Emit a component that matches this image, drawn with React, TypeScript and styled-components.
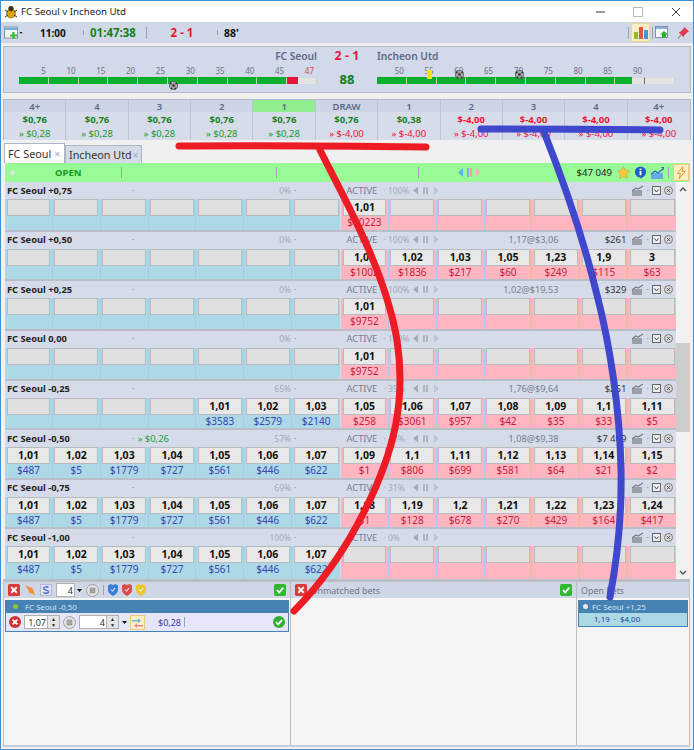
import React from 'react';
import styled, { createGlobalStyle } from 'styled-components';

const GlobalStyle = createGlobalStyle`
  html, body { margin: 0; padding: 0; background: #f0f0f0; }
  body { font-family: "Noto Sans", "Open Sans", sans-serif; }
  * { box-sizing: border-box; }
`;

const Window = styled.div`
  position: relative;
  width: 694px;
  height: 750px;
  border: 1px solid #3f8fd2;
  background: #f0f0f0;
  overflow: hidden;
  display: flex;
  flex-direction: column;
`;

const TitleBar = styled.div`
  height: 21px;
  background: #fff;
  display: flex;
  align-items: center;
  padding-left: 3px;
  font-size: 9.7px;
  color: #222;
  gap: 3px;
  flex: none;
`;

const WindowButtons = styled.div`
  margin-left: auto;
  display: flex;
  align-items: center;
  gap: 28px;
  padding-right: 12px;
`;

const Toolbar = styled.div`
  height: 21px;
  background: #d0d8e8;
  display: flex;
  align-items: center;
  padding-left: 3px;
  flex: none;
`;

const ToolbarText = styled.span<{ $color?: string; $width: number; $center?: boolean; $ml?: number; $size?: number }>`
  width: ${p => p.$width}px;
  margin-left: ${p => p.$ml || 0}px;
  font-size: ${p => p.$size || 11.5}px;
  font-weight: 700;
  color: ${p => p.$color || '#111'};
  text-align: ${p => (p.$center ? 'center' : 'left')};
  flex: none;
`;

const ToolSep = styled.span<{ $h?: number; $ml?: number }>`
  width: 1px;
  height: ${p => p.$h || 12}px;
  background: #9aa2b4;
  margin-left: ${p => p.$ml || 0}px;
  flex: none;
`;

const ToolRight = styled.div`
  margin-left: auto;
  display: flex;
  align-items: center;
  gap: 2px;
  padding-right: 4px;
`;

const ActiveTool = styled.span`
  width: 19px;
  height: 19px;
  background: #fbeec4;
  border: 1px solid #ecd68e;
  display: flex;
  align-items: center;
  justify-content: center;
`;

const PinSlot = styled.span`
  display: flex;
  margin-left: 5px;
`;

const ScorePanel = styled.div`
  margin: 3px 2px 0;
  height: 47px;
  background: #d2d9e9;
  border: 1px solid #b3b9c6;
  display: grid;
  grid-template-columns: 298px 60px 298px;
  grid-template-rows: 18px 1fr;
  padding: 0 15px;
  flex: none;
`;

const TeamName = styled.div<{ $right?: boolean }>`
  font-size: 10.2px;
  font-weight: 600;
  color: #5d6886;
  text-align: ${p => (p.$right ? 'right' : 'left')};
  padding-top: 2px;
`;

const ScoreText = styled.div`
  font-size: 12.5px;
  font-weight: 700;
  color: #e8163c;
  text-align: center;
`;

const Minute = styled.div`
  font-size: 13px;
  font-weight: 700;
  color: #0f7f1c;
  text-align: center;
  padding-top: 5px;
`;

const Timeline = styled.div`
  position: relative;
`;

const TickRow = styled.div`
  display: grid;
  grid-template-columns: repeat(10, 1fr);
  height: 12px;
`;

const Tick = styled.span<{ $red?: boolean }>`
  font-size: 8px;
  line-height: 12px;
  color: ${p => (p.$red ? '#d64058' : '#6d7488')};
  text-align: right;
  padding-right: 3px;
`;

const Track = styled.div`
  display: grid;
  grid-template-columns: repeat(10, 1fr);
  height: 7px;
`;

const Seg = styled.div<{ $stops: string; $line?: string }>`
  background: ${p => p.$stops};
  border-right: 1px solid ${p => p.$line || '#c8d8c8'};
  border-top: 1px solid rgba(0, 0, 0, 0.05);
`;

const Marker = styled.span<{ $x: number; $y: number }>`
  position: absolute;
  left: ${p => p.$x}px;
  top: ${p => p.$y}px;
  display: flex;
`;

const OddsStrip = styled.div`
  margin: 6px 2px 0;
  height: 41px;
  display: grid;
  grid-template-columns: repeat(11, 1fr);
  border: 1px solid #b3b9c6;
  flex: none;
`;

const OddsCell = styled.div`
  background: #d6dcea;
  border-right: 1px solid #bcc3d2;
  display: flex;
  flex-direction: column;
  text-align: center;
  &:last-child { border-right: 0; }
`;

const OddsHead = styled.div<{ $on?: boolean }>`
  height: 12px;
  line-height: 13px;
  font-size: 9.5px;
  font-weight: 600;
  color: #5d6886;
  background: ${p => (p.$on ? '#90ee90' : '#ccd4e6')};
`;

const OddsValue = styled.div<{ $red?: boolean }>`
  font-size: 9.5px;
  font-weight: 700;
  line-height: 16px;
  color: ${p => (p.$red ? '#f01030' : '#167f1e')};
`;

const OddsSub = styled.div<{ $red?: boolean }>`
  font-size: 9.5px;
  line-height: 12px;
  color: ${p => (p.$red ? '#f01030' : '#1a9a2a')};
`;

const Tabs = styled.div`
  margin: 3px 0 0 3px;
  height: 20px;
  display: flex;
  align-items: flex-end;
  flex: none;
`;

const Tab = styled.div<{ $on?: boolean }>`
  height: ${p => (p.$on ? 20 : 18)}px;
  width: ${p => (p.$on ? 61 : 77)}px;
  background: ${p => (p.$on ? '#fff' : '#d4dbe9')};
  border: 1px solid #aeb5c4;
  border-bottom: 0;
  font-size: 10.8px;
  color: #333;
  white-space: nowrap;
  display: flex;
  align-items: center;
  justify-content: space-between;
  padding: 0 3px;
`;

const TabClose = styled.span`
  font-size: 8px;
  color: #a8adb8;
`;

const OpenBar = styled.div`
  margin-left: 4px;
  margin-right: 3px;
  height: 19px;
  background: #98fb98;
  display: flex;
  align-items: center;
  flex: none;
`;

const OpenDot = styled.span`
  width: 5px;
  height: 5px;
  border-radius: 50%;
  background: #d8e8d8;
  margin-left: 5px;
  flex: none;
`;

const OpenLabel = styled.span`
  font-size: 9.5px;
  font-weight: 700;
  color: #129a1a;
  margin-left: 40px;
  width: 66px;
  flex: none;
`;

const TransportSlot = styled.span`
  display: flex;
  margin-left: 39px;
`;

const OpenSum = styled.span`
  font-size: 9.6px;
  color: #222;
  margin-left: auto;
  white-space: nowrap;
`;

const OpenIcons = styled.span`
  display: flex;
  align-items: center;
  gap: 4px;
  margin-left: 5px;
  padding-right: 1px;
`;

const Board = styled.div`
  margin-left: 4px;
  margin-right: 3px;
  height: 397px;
  display: grid;
  grid-template-columns: 1fr 14px;
  flex: none;
`;

const Rows = styled.div`
  display: grid;
  grid-template-rows: repeat(8, 1fr);
  min-height: 0;
`;

const Row = styled.div`
  background: #d6dbea;
  border-bottom: 2px solid #b9bec9;
  display: flex;
  flex-direction: column;
  min-height: 0;
  &:last-child { border-bottom: 0; }
`;

const RowHead = styled.div`
  height: 16px;
  margin-bottom: 1px;
  display: grid;
  grid-template-columns: 1fr 1fr;
  flex: none;
`;

const HeadSide = styled.div<{ $back?: boolean }>`
  display: flex;
  align-items: center;
  padding-left: 2px;
  padding-right: ${p => (p.$back ? 44 : 0)}px;
  min-width: 0;
`;

const RowTitle = styled.span`
  width: 125px;
  font-size: 9.3px;
  font-weight: 700;
  color: #222;
  white-space: nowrap;
  flex: none;
`;

const Dot = styled.span`
  color: #8c92a0;
  font-size: 9px;
  line-height: 1;
  flex: none;
`;

const Matched = styled.span`
  font-size: 9.5px;
  color: #22a040;
  margin-left: 3px;
  white-space: nowrap;
  flex: none;
`;

const Pct = styled.span`
  margin-left: auto;
  font-size: 8.5px;
  color: #a5aab6;
  padding-right: 3px;
`;

const Active = styled.span`
  font-size: 9.3px;
  color: #777e8e;
  margin-left: 4px;
  width: 37px;
  flex: none;
`;

const RowPct = styled.span`
  font-size: 8.5px;
  color: #a5aab6;
  width: 29px;
  flex: none;
`;

const Avg = styled.span`
  font-size: 9.2px;
  color: #777e8e;
  margin-left: auto;
  white-space: nowrap;
`;

const Exposure = styled.span`
  width: 68px;
  font-size: 9.6px;
  color: #333;
  text-align: right;
  white-space: nowrap;
  flex: none;
`;

const AvgGap = styled.span`
  margin-left: auto;
`;

const RowIcons = styled.span`
  display: flex;
  align-items: center;
  gap: 3px;
  margin-left: 5px;
  padding-right: 3px;
  flex: none;
`;

const Ladders = styled.div`
  flex: 1;
  display: grid;
  grid-template-columns: 1fr 1fr;
  gap: 1px;
  min-height: 0;
`;

const Ladder = styled.div<{ $lay?: boolean }>`
  display: grid;
  grid-template-columns: repeat(7, 1fr);
  background: ${p => (p.$lay ? '#ffb6c1' : '#add8e6')};
`;

const Slot = styled.div`
  display: flex;
  flex-direction: column;
  align-items: stretch;
  padding: 0 1.5px;
  border-right: 1px solid #a9c9e6;
  &:last-child { border-right: 0; }
`;

const PriceButton = styled.div<{ $empty: boolean }>`
  height: 17px;
  background: ${p => (p.$empty ? '#e0e0e0' : '#e8e8e8')};
  border: 1px solid #b7babe;
  font-size: 10.5px;
  font-weight: 700;
  line-height: 15px;
  text-align: center;
  color: #111;
  flex: none;
`;

const Amount = styled.div<{ $lay?: boolean }>`
  font-size: 10px;
  line-height: 13px;
  text-align: center;
  color: ${p => (p.$lay ? '#c8203c' : '#3a44b0')};
`;

const Scrollbar = styled.div`
  background: #f2f2f2;
  display: flex;
  flex-direction: column;
  align-items: center;
  justify-content: space-between;
  position: relative;
  padding: 5px 0 4px;
`;

const Thumb = styled.div`
  position: absolute;
  top: 161px;
  left: 0;
  right: 0;
  height: 89px;
  background: #cdcdcd;
`;

const Bottom = styled.div`
  margin: 0 3px 2px 2px;
  flex: 1;
  display: grid;
  grid-template-columns: 287px 286px 1fr;
  border: 1px solid #c2c2c2;
  border-top: 3px solid #b9bec9;
  border-bottom: 2px solid #c8ced8;
  background: #f5f5f5;
  min-height: 0;
`;

const Pane = styled.div`
  border-right: 1px solid #bdbdbd;
  display: flex;
  flex-direction: column;
  &:last-child { border-right: 0; }
`;

const PaneBar = styled.div`
  height: 16px;
  background: #cfd6e6;
  display: flex;
  align-items: center;
  padding: 0 4px;
  gap: 4px;
  flex: none;
  font-size: 8.9px;
  color: #717786;
`;

const SpinGroup = styled.span`
  display: flex;
  align-items: center;
  gap: 2px;
  flex: none;
`;

const BetHead = styled.div<{ $pad: number; $gap: number }>`
  margin: 2px 1px 0 1px;
  height: 13px;
  background: #4682b4;
  display: flex;
  align-items: center;
  padding-left: ${p => p.$pad}px;
  gap: ${p => p.$gap}px;
  font-size: 7.9px;
  color: #d6e4f2;
  white-space: nowrap;
`;

const BetDot = styled.span<{ $color: string }>`
  width: 5px;
  height: 5px;
  border-radius: 50%;
  background: ${p => p.$color};
  flex: none;
`;

const BetRow = styled.div`
  margin: 0 1px;
  height: 19px;
  background: #e6e6fa;
  border: 1px solid #4682b4;
  border-top: 0;
  display: flex;
  align-items: center;
  padding: 0 3px;
  gap: 3px;
  font-size: 9px;
`;

const SpinBox = styled.span<{ $w: number }>`
  width: ${p => p.$w}px;
  height: 14px;
  background: #fff;
  border: 1px solid #b0b0b0;
  display: flex;
  align-items: center;
  justify-content: flex-end;
  font-size: 9px;
  color: #333;
  padding-right: 1px;
  flex: none;
`;

const Spinner = styled.span`
  width: 12px;
  height: 14px;
  background: #e4e4e4;
  border: 1px solid #b0b0b0;
  border-left: 0;
  font-size: 5px;
  line-height: 6px;
  color: #222;
  text-align: center;
  margin-left: -3px;
  flex: none;
`;

const Stake = styled.span`
  color: #3a3aa8;
  margin-left: 10px;
`;

const PushRight = styled.span`
  margin-left: auto;
  display: flex;
`;

const OpenBetRow = styled.div`
  margin: 0 1px;
  height: 14px;
  background: #add8e6;
  border: 1px solid #4682b4;
  border-top: 0;
  font-size: 7.9px;
  line-height: 12px;
  color: #26409a;
  padding-left: 15px;
  white-space: nowrap;
`;

const Sketch = styled.svg`
  position: absolute;
  left: -1px;
  top: -1px;
  pointer-events: none;
`;

/* icons */
const Bug = () => (
  <svg width="14" height="14" viewBox="0 0 14 14">
    <ellipse cx="7" cy="8.500" rx="4.500" ry="4.500" fill="#d8a418" stroke="#6b5410" strokeWidth=".6" />
    <circle cx="7" cy="3.600" r="2.600" fill="#3a3214" />
    <path d="M1 5l3 2M13 5l-3 2M1 12l3-2M13 12l-3-2" stroke="#3a3214" strokeWidth="1" />
  </svg>
);

const NewWindow = () => (
  <svg width="19" height="14" viewBox="0 0 19 14">
    <rect x=".5" y="1" width="13" height="11" fill="#f4f6fa" stroke="#8392a8" />
    <rect x="1" y="1.500" width="12" height="2.500" fill="#78b0e0" />
    <path d="M9.500 6v7M6 9.500h7" stroke="#38b82c" strokeWidth="2.200" />
    <path d="M15.500 6h3l-1.500 2z" fill="#222" />
  </svg>
);

const BarsIcon = () => (
  <svg width="14" height="13" viewBox="0 0 14 13">
    <rect x="0" y="6" width="4" height="7" fill="#8cc030" />
    <rect x="5" y="1" width="4" height="12" fill="#e85440" />
    <rect x="10" y="4" width="4" height="9" fill="#3c9ad8" />
  </svg>
);

const WindowArrow = () => (
  <svg width="15" height="13" viewBox="0 0 15 13">
    <rect x=".5" y=".5" width="12" height="11" fill="#f6f8fb" stroke="#8392a8" />
    <rect x="1" y="1" width="11" height="2" fill="#88b4dc" />
    <path d="M9 5l4 3.500h-2V12H7V8.500H5z" fill="#30b030" />
  </svg>
);

const Pin = () => (
  <svg width="12" height="12" viewBox="0 0 13 13">
    <path d="M8 0l5 5-2 1-3 3-1 2-5-5 2-1 3-3z" fill="#e0394a" />
    <path d="M4 9l-3 3.500" stroke="#888" strokeWidth="1.200" />
  </svg>
);

const Ball = () => (
  <svg width="9" height="9" viewBox="0 0 9 9">
    <circle cx="4.500" cy="4.500" r="4.200" fill="#a8a8a8" stroke="#4c4c4c" strokeWidth=".7" />
    <circle cx="4.500" cy="4.500" r="1.300" fill="#2c2c2c" />
    <circle cx="1.800" cy="2.400" r=".9" fill="#2c2c2c" />
    <circle cx="7.200" cy="2.400" r=".9" fill="#2c2c2c" />
    <circle cx="2.600" cy="7.400" r=".9" fill="#2c2c2c" />
    <circle cx="6.400" cy="7.400" r=".9" fill="#2c2c2c" />
  </svg>
);

const Transport = ({ dim }: { dim?: boolean }) => (
  <svg width={dim ? 26 : 22} height="9" viewBox={dim ? '0 0 26 9' : '0 0 22 9'}>
    {dim ? (
      <>
        <path d="M5 .5v8L0 4.500z" fill="#a4a9b4" />
        <rect x="10" y="1" width="2" height="7" fill="#b0b4be" />
        <rect x="13" y="1" width="2" height="7" fill="#b0b4be" />
        <path d="M21 .5v8l5-4z" fill="#c0c4cc" />
      </>
    ) : (
      <>
        <path d="M5 0v9L0 4.500z" fill="#54b8e8" />
        <rect x="9" y="0" width="2" height="9" fill="#70b8e0" />
        <rect x="12" y="0" width="2" height="9" fill="#f0a0b0" />
        <path d="M18 0v9l4-4.500z" fill="#f8b0bc" />
      </>
    )}
  </svg>
);

const Star = () => (
  <svg width="13" height="13" viewBox="0 0 13 13">
    <path d="M6.500.5l1.900 3.900 4.300.6-3.100 3 .7 4.300-3.800-2-3.800 2 .7-4.300-3.100-3 4.300-.6z" fill="#f8c840" stroke="#d89a20" strokeWidth=".6" />
  </svg>
);

const Info = () => (
  <svg width="13" height="13" viewBox="0 0 13 13">
    <circle cx="6.500" cy="6" r="5.600" fill="#1e60c8" />
    <path d="M6.500 11v2l2-2z" fill="#1e60c8" />
    <rect x="5.600" y="5" width="1.800" height="4.200" fill="#fff" />
    <rect x="5.600" y="2.600" width="1.800" height="1.600" fill="#fff" />
  </svg>
);

const ChartBlue = () => (
  <svg width="13" height="12" viewBox="0 0 13 12">
    <rect x="0" y="6" width="12" height="6" fill="#6aa8e0" />
    <path d="M0 7l4-3 3 2 5-4" stroke="#2a70c0" strokeWidth="1.400" fill="none" />
    <path d="M10 0h3v3z" fill="#2a70c0" />
  </svg>
);

const Bolt = () => (
  <svg width="16" height="17" viewBox="0 0 16 17">
    <rect x=".5" y=".5" width="15" height="16" fill="#fbeec4" stroke="#e9cd7c" />
    <path d="M10 2.500L4.500 9.500h3L6 15l6-7.500H9z" fill="none" stroke="#e0a020" strokeWidth="1" />
  </svg>
);

const ChartGrey = () => (
  <svg width="12" height="11" viewBox="0 0 12 11">
    <rect x="0" y="5" width="10" height="6" fill="#9a9fa8" />
    <path d="M0 6l4-3 2 1 5-3" stroke="#787d88" strokeWidth="1.200" fill="none" />
  </svg>
);

const CheckBoxGrey = () => (
  <svg width="9" height="9" viewBox="0 0 9 9">
    <rect x=".5" y=".5" width="8" height="8" fill="#eee" stroke="#666" />
    <path d="M2.500 3.500L4.500 6l2-2.500" stroke="#444" fill="none" />
  </svg>
);

const CloseGrey = () => (
  <svg width="9" height="9" viewBox="0 0 9 9">
    <circle cx="4.500" cy="4.500" r="4" fill="#d8d8d8" stroke="#777" />
    <path d="M3 3l3 3M6 3L3 6" stroke="#555" />
  </svg>
);

const RedSquareX = () => (
  <svg width="12" height="12" viewBox="0 0 13 13">
    <rect width="13" height="13" rx="2" fill="#d83a3a" />
    <path d="M3.500 3.500l6 6M9.500 3.500l-6 6" stroke="#fff" strokeWidth="2" />
  </svg>
);

const GreenSquareCheck = () => (
  <svg width="12" height="12" viewBox="0 0 12 12">
    <rect width="12" height="12" rx="2" fill="#30b830" />
    <path d="M3 6l2.200 2.400L9.400 3.600" stroke="#fff" strokeWidth="1.800" fill="none" />
  </svg>
);

const RedRoundX = () => (
  <svg width="12" height="12" viewBox="0 0 12 12">
    <circle cx="6" cy="6" r="6" fill="#d43030" />
    <path d="M3.600 3.600l4.800 4.800M8.400 3.600l-4.800 4.800" stroke="#fff" strokeWidth="1.800" />
  </svg>
);

const GreenRoundCheck = () => (
  <svg width="12" height="12" viewBox="0 0 12 12">
    <circle cx="6" cy="6" r="6" fill="#30b030" />
    <path d="M3 6l2.200 2.400L9.200 3.800" stroke="#fff" strokeWidth="1.800" fill="none" />
  </svg>
);

const FireArrow = () => (
  <svg width="12" height="12" viewBox="0 0 12 12">
    <path d="M1 1l6 3 1-1 3 8-7-3 1-1z" fill="#f09030" />
  </svg>
);

const SBox = () => (
  <svg width="12" height="12" viewBox="0 0 12 12">
    <rect x=".5" y=".5" width="11" height="11" fill="#dfe4f4" stroke="#b0b8d0" />
    <path d="M8.500 3.500C7.500 2.500 3.600 2.400 3.600 4.400c0 2.200 4.900 1.200 4.900 3.400 0 2-4.200 1.700-5.200.7" stroke="#4a68c8" strokeWidth="1.400" fill="none" />
  </svg>
);

const StopRound = () => (
  <svg width="13" height="13" viewBox="0 0 13 13">
    <circle cx="6.500" cy="6.500" r="6" fill="#e4e4e4" stroke="#a0a0a0" />
    <rect x="4" y="4" width="5" height="5" fill="#a8a8a8" stroke="#808080" strokeWidth=".5" />
  </svg>
);

const Shield = ({ color }: { color: string }) => (
  <svg width="10" height="12" viewBox="0 0 10 12">
    <path d="M0 1.500L2.500 0 5 1 7.500 0 10 1.500V6c0 2.800-2.500 4.600-5 6-2.500-1.400-5-3.200-5-6z" fill={color} />
    <path d="M3 5.500l1.600 1.800L7 4" stroke="#fff" strokeWidth="1" fill="none" />
  </svg>
);

const Swap = () => (
  <svg width="15" height="15" viewBox="0 0 15 15">
    <rect x=".5" y=".5" width="14" height="14" fill="#fbeec4" stroke="#e9cd7c" />
    <path d="M2 5h6V3l3 3-3 2V6.500H2z" fill="#68b8e0" />
    <path d="M13 10H7V8l-3 3 3 2v-1.500h6z" fill="#f08c98" />
  </svg>
);

const Caret = () => (
  <svg width="5" height="3" viewBox="0 0 5 3">
    <path d="M0 0h5L2.500 3z" fill="#111" />
  </svg>
);

const Chevron = ({ down }: { down?: boolean }) => (
  <svg width="8" height="5" viewBox="0 0 8 5">
    <path d={down ? 'M1 1l3 3 3-3' : 'M1 4l3-3 3 3'} fill="none" stroke="#555" strokeWidth="1.400" />
  </svg>
);

type Cell = [string, string] | null;
type Market = {
  name: string;
  matched?: string;
  back: string;
  lay: string;
  avg?: string;
  exposure?: string;
  left: Cell[];
  right: Cell[];
};

const none: Cell[] = [null, null, null, null, null, null, null];
const fullLeft: Cell[] = [
  ['1,01', '$487'], ['1,02', '$5'], ['1,03', '$1779'], ['1,04', '$727'],
  ['1,05', '$561'], ['1,06', '$446'], ['1,07', '$622'],
];

const markets: Market[] = [
  { name: 'FC Seoul +0,75', back: '0%', lay: '100%', left: none, right: [['1,01', '$10223'], null, null, null, null, null, null] },
  {
    name: 'FC Seoul +0,50', back: '0%', lay: '100%', avg: '1,17@$3,06', exposure: '$261', left: none,
    right: [['1,01', '$1002'], ['1,02', '$1836'], ['1,03', '$217'], ['1,05', '$60'], ['1,23', '$249'], ['1,9', '$115'], ['3', '$63']],
  },
  { name: 'FC Seoul +0,25', back: '0%', lay: '100%', avg: '1,02@$19,53', exposure: '$329', left: none, right: [['1,01', '$9752'], null, null, null, null, null, null] },
  { name: 'FC Seoul 0,00', back: '0%', lay: '100%', left: none, right: [['1,01', '$9752'], null, null, null, null, null, null] },
  {
    name: 'FC Seoul -0,25', back: '65%', lay: '35%', avg: '1,76@$9,64', exposure: '$261',
    left: [null, null, null, null, ['1,01', '$3583'], ['1,02', '$2579'], ['1,03', '$2140']],
    right: [['1,05', '$258'], ['1,06', '$3061'], ['1,07', '$957'], ['1,08', '$42'], ['1,09', '$35'], ['1,1', '$33'], ['1,11', '$5']],
  },
  {
    name: 'FC Seoul -0,50', matched: '» $0,26', back: '57%', lay: '43%', avg: '1,08@$9,38', exposure: '$7 409',
    left: fullLeft,
    right: [['1,09', '$1'], ['1,1', '$806'], ['1,11', '$699'], ['1,12', '$581'], ['1,13', '$64'], ['1,14', '$21'], ['1,15', '$2']],
  },
  {
    name: 'FC Seoul -0,75', back: '69%', lay: '31%',
    left: fullLeft,
    right: [['1,18', '$1'], ['1,19', '$128'], ['1,2', '$678'], ['1,21', '$270'], ['1,22', '$429'], ['1,23', '$164'], ['1,24', '$417']],
  },
  { name: 'FC Seoul -1,00', back: '100%', lay: '0%', left: fullLeft, right: none },
];

const odds = [
  { head: '4+', value: '$0,76', sub: '» $0,28' },
  { head: '4', value: '$0,76', sub: '» $0,28' },
  { head: '3', value: '$0,76', sub: '» $0,28' },
  { head: '2', value: '$0,76', sub: '» $0,28' },
  { head: '1', value: '$0,76', sub: '» $0,28', on: true },
  { head: 'DRAW', value: '$0,76', sub: '» $-4,00', redSub: true },
  { head: '1', value: '$0,38', sub: '» $-4,00', redSub: true },
  { head: '2', value: '$-4,00', sub: '» $-4,00', red: true, redSub: true },
  { head: '3', value: '$-4,00', sub: '» $-4,00', red: true, redSub: true },
  { head: '4', value: '$-4,00', sub: '» $-4,00', red: true, redSub: true },
  { head: '4+', value: '$-4,00', sub: '» $-4,00', red: true, redSub: true },
];

const GREEN = '#0bb02c';
const LIGHT = '#e4e4e4';

const firstHalfSegs = [...Array(9).fill(GREEN), `linear-gradient(to right, #e8163c 38%, ${LIGHT} 38%)`];
const secondHalfSegs = [...Array(8).fill(GREEN), `linear-gradient(to right, ${GREEN} 60%, ${LIGHT} 60%)`, LIGHT];

function LadderSide({ cells, lay }: { cells: Cell[]; lay?: boolean }) {
  return (
    <Ladder $lay={lay}>
      {cells.map((c, i) => (
        <Slot key={i}>
          <PriceButton $empty={!c}>{c ? c[0] : ''}</PriceButton>
          <Amount $lay={lay}>{c ? c[1] : ''}</Amount>
        </Slot>
      ))}
    </Ladder>
  );
}

function MarketRow({ m }: { m: Market }) {
  return (
    <Row>
      <RowHead>
        <HeadSide $back>
          <RowTitle>{m.name}</RowTitle>
          <Dot>·</Dot>
          {m.matched && <Matched>{m.matched}</Matched>}
          <Pct>{m.back}</Pct>
          <Dot>·</Dot>
        </HeadSide>
        <HeadSide>
          <Active>ACTIVE</Active>
          <RowPct>· {m.lay}</RowPct>
          <Transport dim />
          {m.avg ? <Avg>{m.avg}</Avg> : <AvgGap />}
          <Exposure>{m.exposure}</Exposure>
          <RowIcons>
            <ChartGrey />
            <Dot>·</Dot>
            <CheckBoxGrey />
            <CloseGrey />
          </RowIcons>
        </HeadSide>
      </RowHead>
      <Ladders>
        <LadderSide cells={m.left} />
        <LadderSide cells={m.right} lay />
      </Ladders>
    </Row>
  );
}

export default function App() {
  return (
    <>
      <GlobalStyle />
      <Window>
        <TitleBar>
          <Bug />
          <span>FC Seoul v Incheon Utd</span>
          <WindowButtons>
            <svg width="9" height="9" viewBox="0 0 9 9"><path d="M0 5h9" stroke="#333" /></svg>
            <svg width="10" height="10" viewBox="0 0 10 10"><rect x=".5" y=".5" width="9" height="9" fill="none" stroke="#bbb" /></svg>
            <svg width="10" height="10" viewBox="0 0 10 10"><path d="M1 1l8 8M9 1L1 9" stroke="#333" /></svg>
          </WindowButtons>
        </TitleBar>
        <Toolbar>
          <NewWindow />
          <ToolbarText $width={43} $ml={17} $size={10}>11:00</ToolbarText>
          <ToolSep $h={5} />
          <ToolbarText $color="#16801e" $width={56} $ml={6}>01:47:38</ToolbarText>
          <ToolSep />
          <ToolbarText $color="#f01030" $width={70} $center>2 - 1</ToolbarText>
          <ToolSep $h={5} />
          <ToolbarText $width={40} $ml={6} $size={10.500}>88'</ToolbarText>
          <ToolRight>
            <ToolSep />
            <ActiveTool><BarsIcon /></ActiveTool>
            <ToolSep />
            <WindowArrow />
            <PinSlot><Pin /></PinSlot>
          </ToolRight>
        </Toolbar>
        <ScorePanel>
          <TeamName $right>FC Seoul</TeamName>
          <ScoreText>2 - 1</ScoreText>
          <TeamName>Incheon Utd</TeamName>
          <Timeline>
            <TickRow>
              {['5', '10', '15', '20', '25', '30', '35', '40', '45'].map(t => <Tick key={t}>{t}</Tick>)}
              <Tick $red>47</Tick>
            </TickRow>
            <Track>
              {firstHalfSegs.map((s, i) => <Seg key={i} $stops={s} />)}
            </Track>
            <Marker $x={150} $y={16}><Ball /></Marker>
          </Timeline>
          <Minute>88</Minute>
          <Timeline>
            <TickRow>
              {['50', '55', '60', '65', '70', '75', '80', '85', '90', ''].map(t => <Tick key={t}>{t}</Tick>)}
            </TickRow>
            <Track>
              {secondHalfSegs.map((s, i) => <Seg key={i} $stops={s} $line={i === 8 ? '#6a6a6a' : undefined} />)}
            </Track>
            <Marker $x={50} $y={5}>
              <svg width="5" height="9" viewBox="0 0 5 9"><rect width="5" height="9" fill="#f4e020" /></svg>
            </Marker>
            <Marker $x={78} $y={5}><Ball /></Marker>
            <Marker $x={138} $y={5}><Ball /></Marker>
          </Timeline>
        </ScorePanel>
        <OddsStrip>
          {odds.map((o, i) => (
            <OddsCell key={i}>
              <OddsHead $on={o.on}>{o.head}</OddsHead>
              <OddsValue $red={o.red}>{o.value}</OddsValue>
              <OddsSub $red={o.redSub}>{o.sub}</OddsSub>
            </OddsCell>
          ))}
        </OddsStrip>
        <Tabs>
          <Tab $on>FC Seoul<TabClose>✕</TabClose></Tab>
          <Tab>Incheon Utd<TabClose>✕</TabClose></Tab>
        </Tabs>
        <OpenBar>
          <OpenDot />
          <OpenLabel>OPEN</OpenLabel>
          <ToolSep $h={11} />
          <ToolSep $h={11} $ml={154} />
          <ToolSep $h={11} $ml={141} />
          <TransportSlot><Transport /></TransportSlot>
          <OpenSum>$47 049</OpenSum>
          <OpenIcons>
            <Star />
            <Info />
            <ChartBlue />
            <ToolSep $h={11} />
            <Bolt />
          </OpenIcons>
        </OpenBar>
        <Board>
          <Rows>
            {markets.map(m => <MarketRow key={m.name} m={m} />)}
          </Rows>
          <Scrollbar>
            <Chevron />
            <Thumb />
            <Chevron down />
          </Scrollbar>
        </Board>
        <Bottom>
          <Pane>
            <PaneBar>
              <RedSquareX />
              <FireArrow />
              <SBox />
              <SpinGroup>
                <SpinBox $w={19}>4</SpinBox>
                <Caret />
              </SpinGroup>
              <StopRound />
              <ToolSep $h={10} />
              <Shield color="#3a80d8" />
              <Shield color="#e04850" />
              <Shield color="#e8c830" />
              <PushRight><GreenSquareCheck /></PushRight>
            </PaneBar>
            <BetHead $pad={8} $gap={7}>
              <BetDot $color="#8cc830" />
              FC Seoul -0,50
            </BetHead>
            <BetRow>
              <RedRoundX />
              <SpinBox $w={24}>1,07</SpinBox>
              <Spinner>▲<br />▼</Spinner>
              <StopRound />
              <SpinBox $w={28}>4</SpinBox>
              <Spinner>▲<br />▼</Spinner>
              <Caret />
              <Swap />
              <Stake>$0,28</Stake>
              <ToolSep $h={10} />
              <PushRight><GreenRoundCheck /></PushRight>
            </BetRow>
          </Pane>
          <Pane>
            <PaneBar>
              <RedSquareX />
              <span>Unmatched bets</span>
              <PushRight><GreenSquareCheck /></PushRight>
            </PaneBar>
          </Pane>
          <Pane>
            <PaneBar>
              <span>Open bets</span>
            </PaneBar>
            <BetHead $pad={5} $gap={4}>
              <BetDot $color="#e8e8e8" />
              FC Seoul +1,25
            </BetHead>
            <OpenBetRow>1,19 &nbsp;·&nbsp; $4,00</OpenBetRow>
          </Pane>
        </Bottom>
        <Sketch width="694" height="750" viewBox="0 0 694 750" fill="none" strokeLinecap="round" strokeLinejoin="round">
          <path d="M179 146C260 145 350 146 426 147" stroke="#ed1c24" strokeWidth="7" />
          <path d="M320 150C345 200 385 270 397 340C406 400 395 450 365 510C345 550 320 585 294 611" stroke="#ed1c24" strokeWidth="7" />
          <path d="M481 129C540 129 600 129 660 130" stroke="#3f48cc" strokeWidth="7" />
          <path d="M544 132C565 185 585 245 597 295C610 345 620 410 621 470C622 520 617 560 610 597" stroke="#3f48cc" strokeWidth="7" />
        </Sketch>
      </Window>
    </>
  );
}
